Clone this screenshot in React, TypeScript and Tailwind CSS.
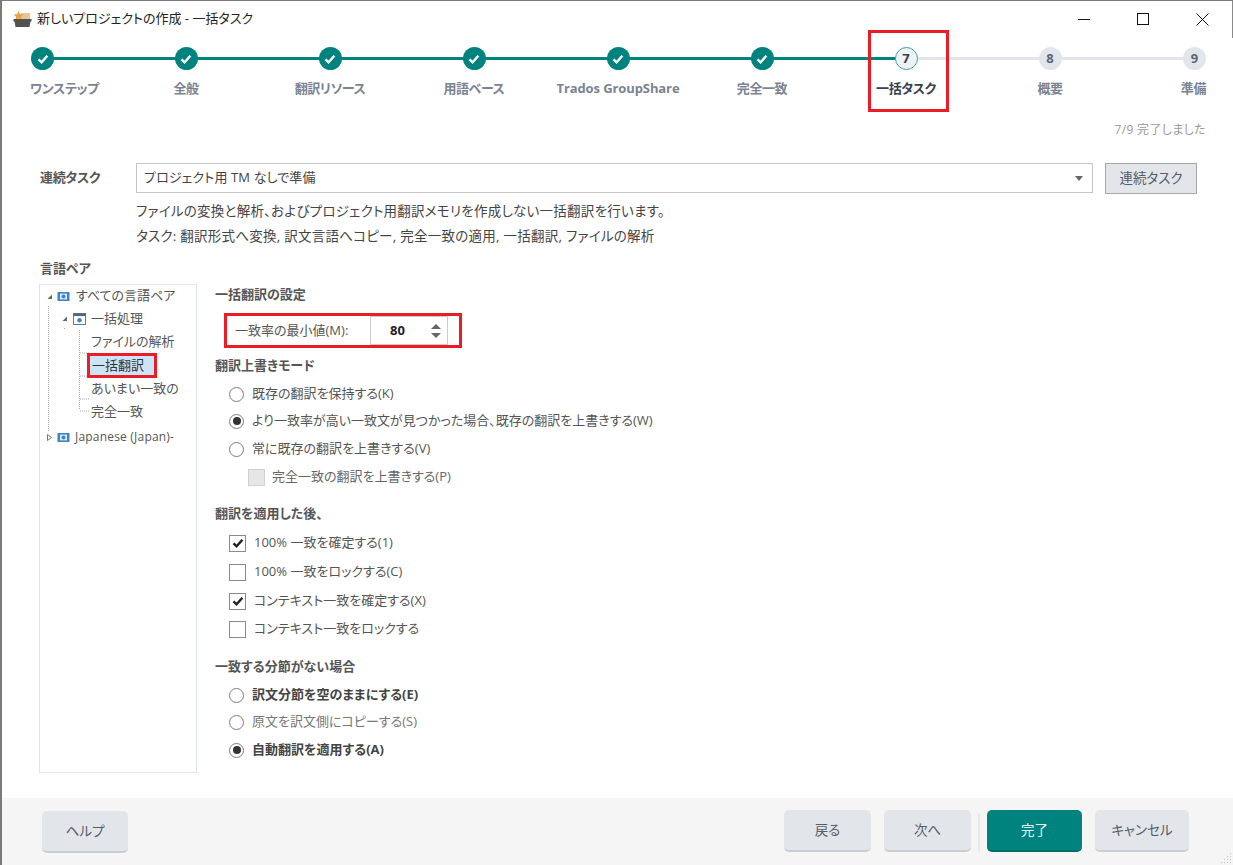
import React from "react";

const FONT = "font-['Open_Sans','Noto_Sans_CJK_JP',sans-serif] [font-feature-settings:'palt']";

function Check({ size = 14 }: { size?: number }) {
  return (
    <svg width={size} height={size} viewBox="0 0 14 14" fill="none">
      <path d="M2.5 7.3 5.6 10.3 11.4 3.8" stroke="currentColor" strokeWidth="2.4" />
    </svg>
  );
}

function Step({ n, label, state, align = "center", bold, latin }: { n: number; label: string; state: "done" | "current" | "todo"; align?: "start" | "center" | "end"; bold?: boolean; latin?: boolean }) {
  const alignCls = align === "start" ? "items-start w-[84px]" : align === "end" ? "items-end w-[84px]" : "items-center w-[144px]";
  return (
    <div className={`relative flex flex-col ${alignCls}`}>
      {state === "done" && (
        <div className={`relative flex h-[23px] w-[23px] items-center justify-center rounded-full bg-[#00837f] text-white ${align === "start" ? "ml-[1px]" : ""}`}>
          <Check />
        </div>
      )}
      {state === "current" && (
        <div className="relative flex h-[23px] w-[23px] items-center justify-center rounded-full border border-[#3da5a1] bg-[#eef2f5] text-[13px] font-bold text-[#39414f]">
          {n}
        </div>
      )}
      {state === "todo" && (
        <div className="relative flex h-[23px] w-[23px] items-center justify-center rounded-full bg-[#e2e6ec] text-[13px] font-bold text-[#5d6675]">
          {n}
        </div>
      )}
      <div className={`mt-[8px] h-[20px] whitespace-nowrap text-[13px] leading-[20px] font-bold ${latin ? "tracking-[-0.1px]" : "tracking-[-0.4px] [word-spacing:-3px]"} ${bold ? "text-[#39414f]" : "text-[#7a8391]"}`}>
        {label}
      </div>
      {bold && <div className="absolute -top-[17px] left-[34px] h-[82px] w-[81px] border-[3px] border-[#ed1c24]" />}
    </div>
  );
}

function Radio({ checked, label, bold, muted }: { checked?: boolean; label: string; bold?: boolean; muted?: boolean }) {
  return (
    <div className="flex h-[20px] items-center pl-[14px]">
      <span className="flex h-[15px] w-[15px] items-center justify-center rounded-full border border-[#7d7d7d] bg-white">
        {checked && <span className="h-[8px] w-[8px] rounded-full bg-[#333]" />}
      </span>
      <span className={`ml-[8px] whitespace-nowrap text-[13px] ${bold ? "font-bold text-[#444]" : muted ? "text-[#777]" : "text-[#555]"}`}>{label}</span>
    </div>
  );
}

function Box({ checked, label }: { checked?: boolean; label: string }) {
  return (
    <div className="flex h-[20px] items-center pl-[14px]">
      <span className="flex h-[17px] w-[17px] items-center justify-center border border-[#8a8a8a] bg-white text-[#222]">
        {checked && <Check />}
      </span>
      <span className="ml-[8px] whitespace-nowrap text-[13px] text-[#555]">{label}</span>
    </div>
  );
}

function Heading({ children, className = "" }: { children: React.ReactNode; className?: string }) {
  return <div className={`h-[20px] text-[13px] leading-[20px] font-bold text-[#555] ${className}`}>{children}</div>;
}

function GlobeIcon() {
  return (
    <svg width="13" height="11" viewBox="0 0 13 11" className="shrink-0">
      <rect x="0.5" y="1" width="12" height="9" fill="#3f86c4" />
      <rect x="3" y="2.6" width="7" height="5.8" fill="#dcebf7" />
      <circle cx="6.5" cy="5.5" r="2" fill="#3f86c4" />
    </svg>
  );
}

function WinIcon() {
  return (
    <svg width="13" height="12" viewBox="0 0 13 12" className="shrink-0">
      <rect x="0.5" y="0.5" width="12" height="11" fill="#fff" stroke="#6d7885" />
      <rect x="0.5" y="0.5" width="12" height="2.6" fill="#5a6572" />
      <circle cx="6.5" cy="7.2" r="2.2" fill="#3f86c4" />
    </svg>
  );
}

function Triangle({ open }: { open?: boolean }) {
  return (
    <svg width="7" height="7" viewBox="0 0 7 7" className="shrink-0">
      {open ? <path d="M6 1.5V6H1.5Z" fill="#666" /> : <path d="M1.5 .5 5.5 3.5 1.5 6.5Z" fill="#fff" stroke="#777" />}
    </svg>
  );
}

function FootBtn({ children, className = "", primary }: { children: React.ReactNode; className?: string; primary?: boolean }) {
  return (
    <div className={`flex h-[42px] items-center justify-center rounded-[5px] border-b-[2px] text-[13.5px] ${primary ? "border-[#006e6a] bg-[#00837f] text-[#e4f3f2]" : "border-[#c9ced5] bg-[#e2e6ea] text-[#555c66]"} ${className}`}>
      {children}
    </div>
  );
}

export default function App() {
  return (
    <div className={`${FONT} relative flex h-[865px] w-[1233px] flex-col overflow-hidden border-t border-l-2 border-[#7a7a7a] bg-white`}>
      <div className="absolute top-0 right-0 h-[37px] w-px bg-[#8a8a8a]" />
      {/* title bar */}
      <div className="flex h-[36px] shrink-0 items-center pl-[11px]">
        <svg width="19" height="18" viewBox="0 0 19 18">
          <rect x="8" y="3" width="9" height="6" fill="#e6c693" />
          <path d="M5.5 1 7 4.2 10.4 4.6 7.9 6.9 8.6 10.2 5.5 8.6 2.4 10.2 3.1 6.9.6 4.6 4 4.2Z" fill="#eaa33c" />
          <path d="M0.5 9H18.5V11.5H17.5L16.5 17H2.5L1.5 11.5H.5Z" fill="#55514e" />
        </svg>
        <div className="ml-[5px] text-[13px] text-[#222]">新しいプロジェクトの作成 - 一括タスク</div>
        <div className="ml-auto flex items-center text-black">
          <svg width="14" height="14" viewBox="0 0 14 14" className="mr-[46px]"><path d="M1 7.5H13" stroke="#111" /></svg>
          <svg width="12" height="12" viewBox="0 0 12 12" className="mr-[47px]"><rect x=".5" y=".5" width="11" height="11" fill="none" stroke="#111" /></svg>
          <svg width="13" height="13" viewBox="0 0 13 13" className="mr-[24px]"><path d="M.5.5 12.5 12.5M12.5.5.5 12.5" stroke="#111" /></svg>
        </div>
      </div>

      {/* stepper */}
      <div className="relative flex shrink-0 pt-[10px] pl-[28px]">
        <div className="absolute top-[20px] left-[40px] h-[3px] w-[864px] bg-[#00837f]" />
        <div className="absolute top-[20px] left-[904px] h-[3px] w-[288px] bg-[#e2e6ec]" />
        <Step n={1} label="ワン ステップ" state="done" align="start" />
        <Step n={2} label="全般" state="done" />
        <Step n={3} label="翻訳リソース" state="done" />
        <Step n={4} label="用語ベース" state="done" />
        <Step n={5} label="Trados GroupShare" state="done" latin />
        <Step n={6} label="完全一致" state="done" />
        <Step n={7} label="一括タスク" state="current" bold />
        <Step n={8} label="概要" state="todo" />
        <Step n={9} label="準備" state="todo" align="end" />
      </div>

      <div className="mt-[23px] h-[18px] shrink-0 pr-[27px] text-right text-[12px] leading-[18px] tracking-[0.35px] text-[#999]">7/9 完了しました</div>

      {/* sequence row */}
      <div className="mt-[24px] flex h-[30px] shrink-0 items-center pl-[38px]">
        <div className="w-[96px] text-[13px] font-bold tracking-[-0.3px] text-[#555]">連続タスク</div>
        <div className="flex h-[30px] w-[957px] items-center justify-between border border-[#c4c4c4] pr-[9px] pl-[7px] text-[13px] tracking-[0.12px] text-[#444]">
          <span>プロジェクト用 TM なしで準備</span>
          <span className="h-0 w-0 border-x-[4.5px] border-t-[5px] border-x-transparent border-t-[#666]" />
        </div>
        <div className="ml-[12px] flex h-[31px] w-[92px] items-center justify-center border border-[#a4a8ac] bg-[#e2e6ea] text-[13.5px] text-[#555c66]">連続タスク</div>
      </div>

      <div className="shrink-0 pl-[134px] text-[13.5px] tracking-[0.25px] text-[#444]">
        <div className="mt-[8px] h-[20px] leading-[20px]">ファイルの変換と解析、およびプロジェクト用翻訳メモリを作成しない一括翻訳を行います。</div>
        <div className="mt-[5px] h-[20px] leading-[20px]">タスク: 翻訳形式へ変換, 訳文言語へコピー, 完全一致の適用, 一括翻訳, ファイルの解析</div>
      </div>

      <Heading className="mt-[12px] shrink-0 pl-[38px]">言語ペア</Heading>

      <div className="mt-[6px] flex shrink-0 pl-[37px]">
        {/* tree */}
        <div className="relative h-[489px] w-[158px] shrink-0 border border-[#dde4ee] text-[13px] text-[#555]">
          <svg width="60" height="160" className="absolute top-0 left-0">
            <path d="M8.5 21V147M24.5 43V45M39.5 45V125M40 68H50M40 91H50M40 114H50M40 126H50" stroke="#aaa" strokeDasharray="1 1" fill="none" />
          </svg>
          <div className="relative flex h-[22px] items-center pl-[6px]">
            <Triangle open />
            <span className="ml-[4px]"><GlobeIcon /></span>
            <span className="ml-[6px] whitespace-nowrap">すべての言語ペア</span>
          </div>
          <div className="relative flex h-[23px] items-center pl-[21px]">
            <Triangle open />
            <span className="ml-[5px]"><WinIcon /></span>
            <span className="ml-[5px] whitespace-nowrap">一括処理</span>
          </div>
          <div className="relative flex h-[24px] items-center pl-[51px] whitespace-nowrap">ファイルの解析</div>
          <div className="relative flex h-[23px] items-center pl-[47px]">
            <span className="flex h-[25px] w-[70px] items-center border-[3px] border-[#ed1c24] bg-[#cce4f7] pl-[2px] text-[#333]">一括翻訳</span>
          </div>
          <div className="relative flex h-[23px] items-center pl-[51px] whitespace-nowrap">あいまい一致の</div>
          <div className="relative flex h-[24px] items-center pl-[51px] whitespace-nowrap">完全一致</div>
          <div className="relative flex h-[26px] items-center overflow-hidden pl-[6px]">
            <Triangle />
            <span className="ml-[4px]"><GlobeIcon /></span>
            <span className="ml-[5px] whitespace-nowrap text-[12px] tracking-[0.2px]">Japanese (Japan)-</span>
          </div>
        </div>

        {/* settings */}
        <div className="ml-[18px] flex min-w-0 flex-col">
          <Heading>一括翻訳の設定</Heading>
          <div className="mt-[9px] ml-[9px] flex h-[35px] w-[238px] items-center border-[3px] border-[#ed1c24] pl-[8px]">
            <span className="w-[135px] shrink-0 text-[13px] text-[#555]">一致率の最小値(M):</span>
            <div className="flex h-[29px] w-[78px] shrink-0 items-center border border-[#ccc] pr-[6px] pl-[19px]">
              <span className="text-[13px] font-bold text-[#222]">80</span>
              <div className="ml-auto flex flex-col gap-[4px]">
                <span className="block h-0 w-0 border-x-[5px] border-b-[5px] border-x-transparent border-b-[#666]" />
                <span className="block h-0 w-0 border-x-[5px] border-t-[5px] border-x-transparent border-t-[#666]" />
              </div>
            </div>
          </div>
          <Heading className="mt-[7px]">翻訳上書きモード</Heading>
          <div className="mt-[9px]"><Radio label="既存の翻訳を保持する(K)" /></div>
          <div className="mt-[7px]"><Radio checked label="より一致率が高い一致文が見つかった場合、既存の翻訳を上書きする(W)" /></div>
          <div className="mt-[8px]"><Radio label="常に既存の翻訳を上書きする(V)" /></div>
          <div className="mt-[8px] flex h-[20px] items-center pl-[33px]">
            <span className="h-[17px] w-[17px] border border-[#d0d0d0] bg-[#e6e6e6]" />
            <span className="ml-[7px] text-[13px] text-[#666]">完全一致の翻訳を上書きする(P)</span>
          </div>
          <Heading className="mt-[16px]">翻訳を適用した後、</Heading>
          <div className="mt-[10px]"><Box checked label="100% 一致を確定する(1)" /></div>
          <div className="mt-[9px]"><Box label="100% 一致をロックする(C)" /></div>
          <div className="mt-[9px]"><Box checked label="コンテキスト一致を確定する(X)" /></div>
          <div className="mt-[8px]"><Box label="コンテキスト一致をロックする" /></div>
          <Heading className="mt-[17px]">一致する分節がない場合</Heading>
          <div className="mt-[9px]"><Radio bold label="訳文分節を空のままにする(E)" /></div>
          <div className="mt-[7px]"><Radio muted label="原文を訳文側にコピーする(S)" /></div>
          <div className="mt-[8px]"><Radio checked bold label="自動翻訳を適用する(A)" /></div>
        </div>
      </div>

      {/* footer */}
      <div className="relative mt-auto flex h-[67px] shrink-0 items-start bg-[#f5f5f5] pt-[12px] pl-[40px]">
        <FootBtn className="mt-[1px] w-[86px]">ヘルプ</FootBtn>
        <FootBtn className="ml-[656px] w-[87px]">戻る</FootBtn>
        <FootBtn className="ml-[13px] w-[87px]">次へ</FootBtn>
        <div className="mx-[7px] mt-[3px] h-[39px] w-[2px] bg-[#e6e8ea]" />
        <FootBtn primary className="w-[95px]">完了</FootBtn>
        <FootBtn className="ml-[13px] w-[94px]">キャンセル</FootBtn>
        <svg width="12" height="12" viewBox="0 0 12 12" className="absolute right-[1px] bottom-[1px]">
          <path d="M10 1h1v1h-1zM10 4h1v1h-1zM7 4h1v1H7zM10 7h1v1h-1zM7 7h1v1H7zM4 7h1v1H4zM10 10h1v1h-1zM7 10h1v1H7zM4 10h1v1H4zM1 10h1v1H1z" fill="#c4c4c4" />
        </svg>
      </div>
    </div>
  );
}
